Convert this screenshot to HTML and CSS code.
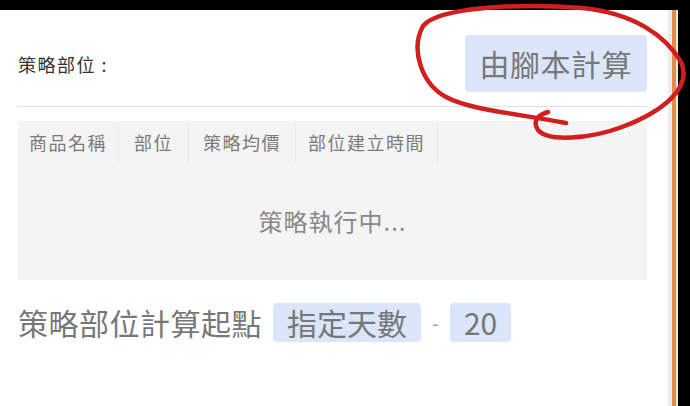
FILE: index.html
```html
<!DOCTYPE html>
<html lang="zh-Hant">
<head>
    <meta charset="UTF-8">
    <meta name="viewport" content="width=device-width, initial-scale=1.0">
    <title>策略部位</title>
    <link rel="stylesheet" href="styles.css">
</head>
<body>
    <div class="screen">
        <!-- Main panel -->
        <div class="page">
            <div class="position-head">
                <span class="head-label">策略部位 :</span>
                <span class="chip chip-large">由腳本計算</span>
            </div>

            <div class="position-table">
                <div class="table-head">
                    <div class="cell col-name">商品名稱</div>
                    <div class="cell col-pos">部位</div>
                    <div class="cell col-avg">策略均價</div>
                    <div class="cell col-time">部位建立時間</div>
                </div>
                <div class="table-empty">策略執行中...</div>
            </div>

            <div class="calc-row">
                <span class="calc-label">策略部位計算起點</span>
                <span class="chip">指定天數</span>
                <span class="dash">-</span>
                <span class="chip">20</span>
            </div>
        </div>

        <!-- Right edge of the window -->
        <div class="edge edge-gray"></div>
        <div class="edge edge-orange"></div>
        <div class="edge edge-light"></div>
    </div>

    <!-- Hand drawn marker on top of the screenshot -->
    <svg class="marker" width="690" height="406" viewBox="0 0 690 406">
        <path d="M 566 123 C 520 114, 470 110, 446 97 C 422 84, 410 50, 423 26 C 438 7, 520 3, 582 8 C 634 13, 666 36, 681 62 C 693 88, 662 112, 622 127 C 590 139, 548 142, 538 130 C 532 121, 538 115, 548 112"
              fill="none" stroke="#d11f1f" stroke-width="4.5" stroke-linecap="round"/>
    </svg>
</body>
</html>
```

FILE: styles.css
```css
body {
    margin: 0;
    padding: 0;
    background: #000;
    font-family: "Noto Sans CJK TC", "Noto Sans", sans-serif;
    position: relative;
    width: 690px;
    height: 406px;
    overflow: hidden;
}
.screen {
    display: flex;
    margin-top: 10px;
    height: 396px;
}
.page {
    width: 668px;
    box-sizing: border-box;
    padding: 0 21px 0 18px;
    background: #fff;
}
.edge {
    height: 100%;
}
.edge-gray {
    width: 4px;
    background: #ececec;
}
.edge-orange {
    width: 4px;
    background: #e88a4c;
}
.edge-light {
    width: 2px;
    background: #efe6de;
}
.position-head {
    display: flex;
    justify-content: space-between;
    align-items: center;
    padding: 25px 0 14px;
    border-bottom: 1px solid #e0e0e0;
}
.head-label {
    font-size: 18px;
    letter-spacing: 1.5px;
    color: #333;
}
.chip {
    background: #dbe6fa;
    color: #777;
    border-radius: 4px;
    font-size: 30px;
    line-height: 39px;
    padding: 0 14px;
}
.chip-large {
    line-height: 41px;
    padding: 8px 15px;
    letter-spacing: 0.5px;
}
.position-table {
    margin-top: 14px;
    background: #f4f4f4;
    height: 159px;
    display: flex;
    flex-direction: column;
}
.table-head {
    display: flex;
    height: 43px;
}
.cell {
    box-sizing: border-box;
    border-right: 1px solid #ebebeb;
    font-size: 18px;
    letter-spacing: 1.5px;
    color: #7a7a7a;
    line-height: 43px;
    text-align: center;
}
.col-name { width: 101px; }
.col-pos { width: 70px; }
.col-avg { width: 107px; }
.col-time { width: 142px; }
.table-empty {
    flex: 1;
    display: flex;
    align-items: center;
    justify-content: center;
    font-size: 24px;
    letter-spacing: 1px;
    color: #888;
    padding-bottom: 4px;
}
.calc-row {
    display: flex;
    align-items: center;
    gap: 10px;
    margin-top: 20px;
}
.calc-label {
    font-size: 30px;
    letter-spacing: 0.5px;
    color: #777;
    margin-right: 1px;
}
.dash {
    font-size: 20px;
    color: #999;
    margin: 0 1px;
}
.marker {
    position: absolute;
    left: 0;
    top: 0;
    pointer-events: none;
}
```
